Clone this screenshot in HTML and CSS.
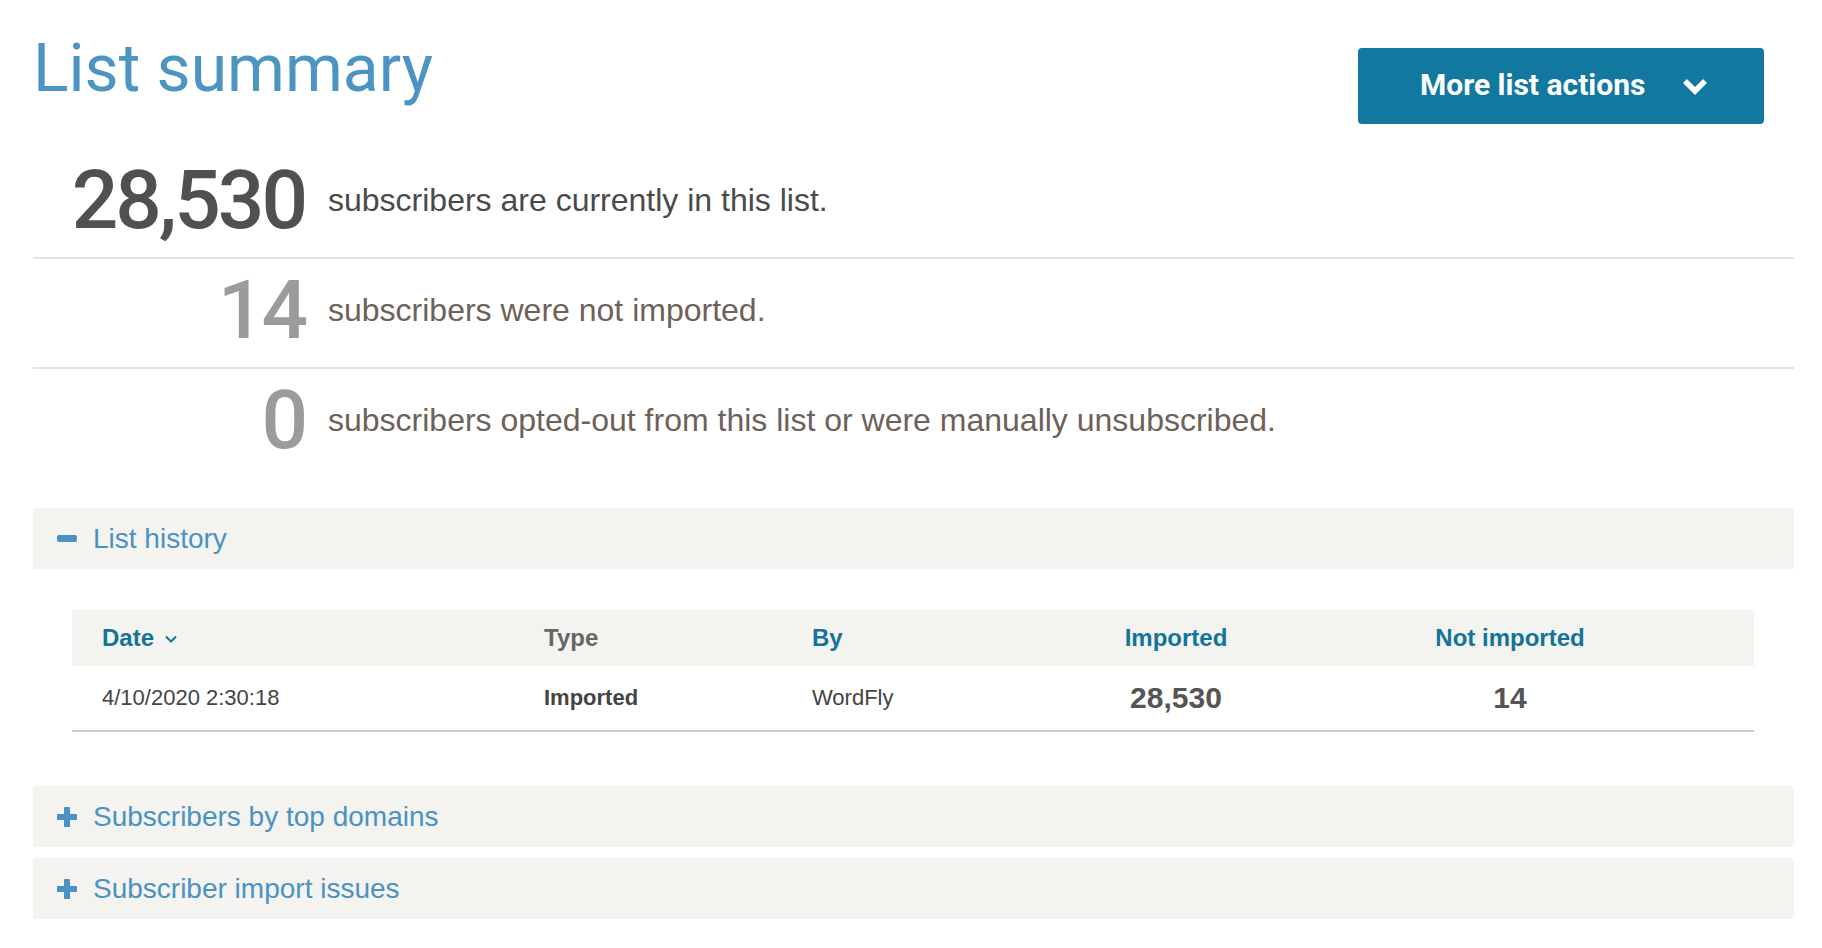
FILE: index.html
```html
<!DOCTYPE html>
<html lang="en">
<head>
    <meta charset="UTF-8">
    <meta name="viewport" content="width=device-width, initial-scale=1.0">
    <title>List summary</title>
    <link rel="stylesheet" href="styles.css">
</head>
<body>
    <div class="page">
        <div class="page-header">
            <h1>List summary</h1>
            <button class="btn-actions" type="button">
                <span>More list actions</span>
                <svg class="chevron" width="26" height="17" viewBox="0 0 26 17">
                    <polyline points="3,3 13,13 23,3" fill="none" stroke="#fff" stroke-width="5.5" stroke-linejoin="miter"/>
                </svg>
            </button>
        </div>

        <div class="stats">
            <div class="stat-row">
                <div class="stat-num main">28,530</div>
                <div class="stat-text main">subscribers are currently in this list.</div>
            </div>
            <div class="stat-row">
                <div class="stat-num">14</div>
                <div class="stat-text">subscribers were not imported.</div>
            </div>
            <div class="stat-row last">
                <div class="stat-num">0</div>
                <div class="stat-text">subscribers opted-out from this list or were manually unsubscribed.</div>
            </div>
        </div>

        <div class="panel open">
            <div class="panel-head">
                <span class="icon-minus"></span>
                <span>List history</span>
            </div>
            <table class="history">
                <colgroup>
                    <col style="width: 442px">
                    <col style="width: 268px">
                    <col style="width: 304px">
                    <col style="width: 180px">
                    <col style="width: 488px">
                </colgroup>
                <thead>
                    <tr>
                        <th class="sortable">Date
                            <svg class="sort" width="12" height="8" viewBox="0 0 12 8">
                                <polyline points="1,1.5 6,6.5 11,1.5" fill="none" stroke="#13739b" stroke-width="2"/>
                            </svg>
                        </th>
                        <th class="plain">Type</th>
                        <th>By</th>
                        <th class="center">Imported</th>
                        <th class="center">Not imported</th>
                    </tr>
                </thead>
                <tbody>
                    <tr>
                        <td>4/10/2020 2:30:18</td>
                        <td class="bold">Imported</td>
                        <td>WordFly</td>
                        <td class="center big">28,530</td>
                        <td class="center big">14</td>
                    </tr>
                </tbody>
            </table>
        </div>

        <div class="panel">
            <div class="panel-head">
                <span class="icon-plus"></span>
                <span>Subscribers by top domains</span>
            </div>
        </div>
        <div class="panel">
            <div class="panel-head">
                <span class="icon-plus"></span>
                <span>Subscriber import issues</span>
            </div>
        </div>
    </div>
</body>
</html>
```

FILE: styles.css
```css
body {
    margin: 0;
    padding: 0;
    font-family: "Liberation Sans", Arial, sans-serif;
    background: #fff;
    color: #444;
}
.page {
    padding: 36px 28px 0 33px;
}
.page-header {
    display: flex;
    justify-content: space-between;
    align-items: flex-start;
    margin-bottom: 25px;
}
h1 {
    margin: 0;
    font-family: Roboto, sans-serif;
    font-weight: 400;
    font-size: 66px;
    line-height: 1;
    color: #4b94c4;
}
.btn-actions {
    margin: 12px 30px 0 0;
    width: 406px;
    height: 76px;
    padding: 0 56px 4px 62px;
    display: flex;
    align-items: center;
    justify-content: space-between;
    background-color: #13789f;
    color: #fff;
    border: none;
    border-radius: 4px;
    font-family: Roboto, sans-serif;
    font-weight: 700;
    font-size: 30px;
    cursor: pointer;
}
.btn-actions .chevron {
    margin-top: 4px;
}

.stat-row {
    display: flex;
    align-items: center;
    padding: 10px 0 16px;
    border-bottom: 2px solid #e3e3e3;
}
.stat-row.last {
    border-bottom: none;
}
.stat-num {
    width: 272px;
    flex: none;
    text-align: right;
    font-family: Roboto, sans-serif;
    font-weight: 500;
    font-size: 82px;
    line-height: 1;
    letter-spacing: -3px;
    color: #9b9b9b;
}
.stat-num.main {
    color: #505050;
}
.stat-text {
    margin-left: 23px;
    font-size: 32px;
    line-height: 1;
    color: #6e6158;
}
.stat-text.main {
    color: #4a4a4a;
}

.panel {
    margin-top: 11px;
}
.panel.open {
    margin-top: 31px;
    margin-bottom: 54px;
}
.panel-head {
    display: flex;
    align-items: center;
    height: 61px;
    padding-left: 24px;
    background-color: #f4f3f0;
    border-radius: 4px;
    font-size: 28px;
    color: #4a92c3;
}
.panel.open .panel-head {
    border-radius: 4px 4px 0 0;
}
.icon-minus {
    width: 20px;
    height: 7px;
    margin-right: 16px;
    border-radius: 2px;
    background-color: #4a92c3;
}
.icon-plus {
    position: relative;
    width: 20px;
    height: 20px;
    margin-right: 16px;
}
.icon-plus::before,
.icon-plus::after {
    content: "";
    position: absolute;
    background-color: #4a92c3;
    border-radius: 1px;
}
.icon-plus::before {
    left: 0;
    top: 7px;
    width: 20px;
    height: 6px;
}
.icon-plus::after {
    left: 7px;
    top: 0;
    width: 6px;
    height: 20px;
}

.history {
    width: 1682px;
    margin: 41px 0 0 39px;
    border-collapse: collapse;
    table-layout: fixed;
}
.history th,
.history td {
    padding: 0 30px;
    text-align: left;
    white-space: nowrap;
}
.history th:first-child,
.history td:first-child {
    padding-left: 30px;
}
.history thead tr {
    background-color: #f3f3f0;
    height: 56px;
}
.history th {
    font-size: 24px;
    font-weight: 700;
    color: #13739b;
}
.history th.plain {
    color: #666;
}
.history .sort {
    margin-left: 4px;
    vertical-align: 3px;
}
.history tbody tr {
    height: 65px;
    border-bottom: 2px solid #cdcdcd;
}
.history td {
    font-size: 22px;
    color: #444;
}
.history td.bold {
    font-weight: 700;
}
.history .center {
    text-align: center;
}
.history td.big {
    font-size: 30px;
    font-weight: 700;
    color: #555;
}
```
